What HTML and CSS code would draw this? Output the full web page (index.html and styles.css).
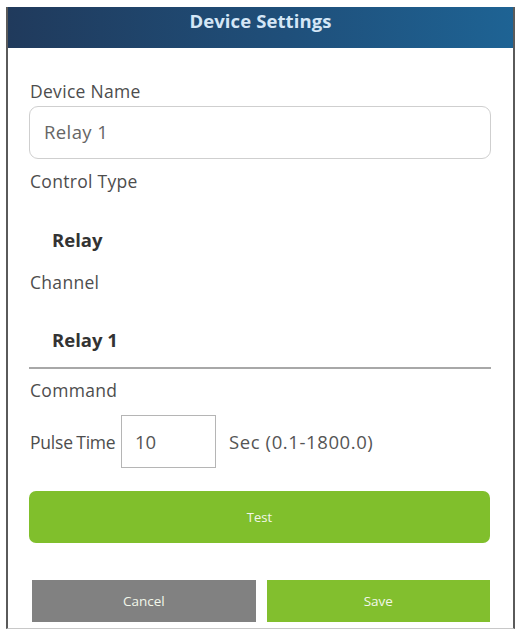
FILE: index.html
```html
<!DOCTYPE html>
<html>
<head>
<meta charset="utf-8">
<link rel="stylesheet" href="styles.css">
</head>
<body>
<div class="frame">
  <div class="header">Device Settings</div>
  <div class="content">
    <div class="label l-name">Device Name</div>
    <div class="text-input">Relay 1</div>
    <div class="label l-type">Control Type</div>
    <div class="value v-type">Relay</div>
    <div class="label l-channel">Channel</div>
    <div class="value v-channel">Relay 1</div>
    <div class="divider"></div>
    <div class="label l-command">Command</div>
    <div class="pulse-row">
      <span class="pulse-label">Pulse Time</span>
      <div class="pulse-input">10</div>
      <span class="pulse-unit">Sec (0.1-1800.0)</span>
    </div>
    <div class="btn btn-test">Test</div>
    <div class="actions">
      <div class="btn btn-cancel">Cancel</div>
      <div class="btn btn-save">Save</div>
    </div>
  </div>
</div>
</body>
</html>
```
FILE: styles.css
```css
html, body {
  margin: 0;
  padding: 0;
  background: #ffffff;
}
body {
  font-family: "Open Sans", "Noto Sans", sans-serif;
  color: #4a4a4a;
}
.frame {
  margin: 7px 3px 0 6px;
  width: 509px;
  height: 622px;
  box-sizing: border-box;
  border-left: 2px solid #5a5a5a;
  border-right: 2px solid #5a5a5a;
  border-bottom: 1px solid #c8c8c8;
  display: flex;
  flex-direction: column;
}
.header {
  height: 41px;
  background: linear-gradient(to right, #203a5c 0%, #1f4f7a 55%, #1e6394 100%);
  color: #d4e6f6;
  font-weight: 700;
  font-size: 18.5px;
  text-align: center;
  line-height: 28px;
  letter-spacing: 0.1px;
}
.content {
  padding: 32px 22px 0 21px;
  display: flex;
  flex-direction: column;
}
.label {
  font-size: 17.5px;
  line-height: 22px;
  height: 22px;
  color: #4d4d4d;
  padding-left: 1px;
  letter-spacing: 0.3px;
  white-space: nowrap;
}
.text-input {
  margin-top: 4px;
  height: 53px;
  box-sizing: border-box;
  border: 1.5px solid #cfcfcf;
  border-radius: 9px;
  padding-left: 14px;
  line-height: 50px;
  font-size: 18.5px;
  letter-spacing: 0.4px;
  color: #666666;
}
.l-type { margin-top: 11px; }
.value {
  font-weight: 700;
  font-size: 18.5px;
  line-height: 22px;
  height: 22px;
  color: #333333;
  padding-left: 23px;
}
.v-type { margin-top: 37px; }
.l-channel { margin-top: 20px; }
.v-channel { margin-top: 36px; }
.divider {
  margin-top: 16px;
  height: 2px;
  background: #a8a8a8;
}
.l-command { margin-top: 10px; }
.pulse-row {
  margin-top: 14px;
  display: flex;
  align-items: center;
  height: 53px;
  font-size: 17.5px;
  white-space: nowrap;
}
.pulse-label {
  width: 91px;
  padding-left: 1px;
  color: #4d4d4d;
  letter-spacing: -0.2px;
  word-spacing: -1px;
}
.pulse-input {
  width: 95px;
  height: 53px;
  box-sizing: border-box;
  border: 1px solid #b5b5b5;
  padding-left: 13px;
  line-height: 51px;
  font-size: 18.5px;
  color: #555555;
}
.pulse-unit {
  margin-left: 13px;
  color: #555555;
  font-size: 18.5px;
  letter-spacing: 0.6px;
}
.btn {
  color: #f2f7ea;
  font-size: 13.5px;
  text-align: center;
}
.btn-test {
  margin-top: 23px;
  height: 52px;
  line-height: 52px;
  border-radius: 7px;
  background: #80bf2c;
  margin-right: 1px;
  font-size: 13px;
}
.actions {
  margin-top: 37px;
  display: flex;
  gap: 11px;
  padding: 0 1px 0 3px;
}
.actions .btn {
  flex: 1;
  height: 42px;
  line-height: 42px;
}
.btn-cancel {
  background: #818181;
}
.btn-save {
  background: #82bf2e;
}
```
